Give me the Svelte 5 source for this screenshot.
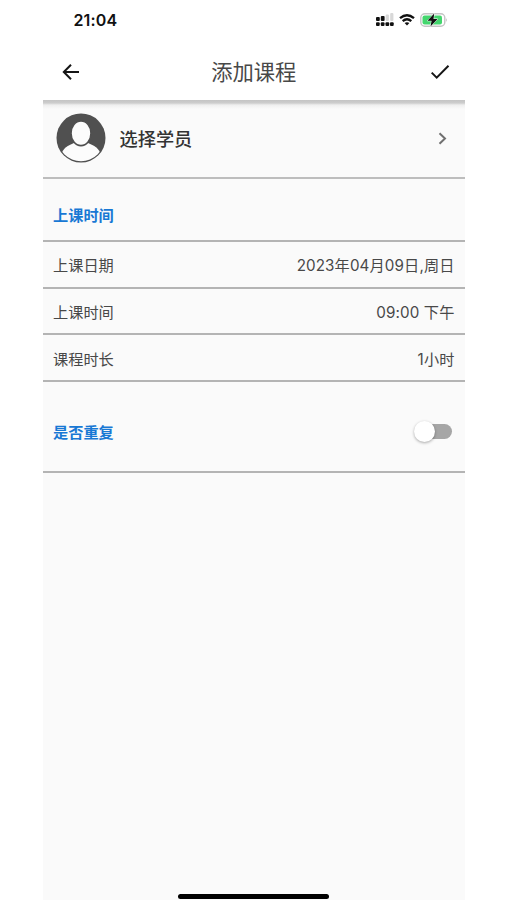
<script>
  const rows = [
    { label: '上课日期', value: '2023年04月09日,周日' },
    { label: '上课时间', value: '09:00 下午' },
    { label: '课程时长', value: '1小时' }
  ];
  let repeat = $state(false);
</script>

<div class="phone">
  <header>
    <div class="status">
      <span class="time">21:04</span>
      <div class="indicators">
        <svg width="18" height="14" viewBox="0 0 18 14">
          <g fill="#111">
            <rect x="0" y="4" width="3.8" height="4" rx="1" />
            <rect x="4.8" y="3" width="3.8" height="5" rx="1" />
            <rect x="0" y="9.3" width="3.7" height="3.7" rx="1" />
            <rect x="4.8" y="9.3" width="3.7" height="3.7" rx="1" />
            <rect x="9.5" y="9.3" width="3.7" height="3.7" rx="1" />
            <rect x="14" y="9.3" width="3.7" height="3.7" rx="1" />
          </g>
          <g fill="#d8d8d8">
            <rect x="9.7" y="1.5" width="3.2" height="6.5" rx="1" />
            <rect x="14.2" y="0" width="3.2" height="8" rx="1" />
          </g>
        </svg>
        <svg class="wifi" width="16" height="12" viewBox="0 0 16 12" fill="none" stroke="#111" stroke-width="2.3">
          <path d="M1 4.2 Q8 -1.8 15 4.2" />
          <path d="M3.7 7.2 Q8 3.4 12.3 7.2" />
          <path d="M5.6 9.1 Q8 7.2 10.4 9.1 L8 11.6Z" fill="#111" stroke="none" />
        </svg>
        <svg class="battery" width="28" height="14" viewBox="0 0 28 14">
          <rect x=".8" y=".8" width="24" height="12.4" rx="4" fill="#fff" stroke="#c4c4c4" stroke-width="1.4" />
          <rect x="2.5" y="2.5" width="19.5" height="9" rx="2" fill="#43d66d" />
          <path d="M26 5 Q27.8 7 26 9Z" fill="#bdbdbd" />
          <path d="M14.2 .6 L7.4 7.8 H11.6 L10.5 13.4 L17.6 6 H13.5Z" fill="#111" stroke="#fff" stroke-width="1" paint-order="stroke" />
        </svg>
      </div>
    </div>
    <nav>
      <svg width="18" height="18" viewBox="0 0 18 18" fill="none" stroke="#151515" stroke-width="2">
        <path d="M9 1.7 L1.8 9 L9 16.3 M2 9 H17" />
      </svg>
      <h1>添加课程</h1>
      <svg width="20" height="16" viewBox="0 0 20 16" fill="none" stroke="#151515" stroke-width="2">
        <path d="M1.7 8.6 L6.7 13.6 L18.5 1.8" />
      </svg>
    </nav>
  </header>

  <div class="student">
    <svg width="50" height="50" viewBox="0 0 50 50">
      <defs><clipPath id="face"><circle cx="25" cy="25" r="23.3" /></clipPath></defs>
      <circle cx="25" cy="25" r="24.5" fill="#505050" />
      <g clip-path="url(#face)" fill="#fcfcfc">
        <path d="M5 42 C7 35 12 32.5 18 30 H32 C38 32.5 43 35 45 42 L40 50 H10Z" />
        <ellipse cx="25" cy="20.3" rx="10" ry="12.3" stroke="#505050" stroke-width="1.6" />
      </g>
    </svg>
    <span>选择学员</span>
    <svg class="chevron" width="9" height="13" viewBox="0 0 9 13" fill="none" stroke="#707070" stroke-width="2">
      <path d="M1.5 1.2 L7 6.5 L1.5 11.8" />
    </svg>
  </div>

  <div class="section">上课时间</div>
  {#each rows as row}
    <div class="row"><span>{row.label}</span><span class="value">{row.value}</span></div>
  {/each}
  <div class="section repeat">
    <span>是否重复</span>
    <button class="switch" class:on={repeat} aria-label="是否重复" onclick={() => (repeat = !repeat)}>
      <i></i>
    </button>
  </div>
  <div class="home"></div>
</div>

<style>
  :global(body) { background: #fff; }
  .phone {
    box-sizing: border-box;
    display: flex;
    flex-direction: column;
    width: 421.5px;
    height: 900px;
    margin-left: 43px;
    background: #fafafa;
    color: #484848;
    font-family: Inter, "Noto Sans CJK SC", sans-serif;
    font-size: 15.2px;
  }
  header {
    height: 100px;
    background: #fff;
    flex: none;
  }
  .status {
    display: flex;
    justify-content: space-between;
    align-items: center;
    height: 40px;
    padding: 0 17px 0 30.5px;
  }
  .time { font-size: 16px; font-weight: 600; color: #111; letter-spacing: 0.15px; }
  .indicators { display: flex; align-items: center; }
  .wifi { margin-left: 5px; }
  .battery { margin-left: 5px; }
  nav {
    display: flex;
    justify-content: space-between;
    align-items: center;
    height: 64px;
    padding: 0 14px 0 19px;
  }
  h1 { margin: 0 3px 0 0; font-size: 21.3px; font-weight: 400; line-height: 32px; color: #484848; }
  .student {
    box-sizing: border-box;
    display: flex;
    align-items: center;
    height: 78.5px;
    padding: 0 18px 0 13px;
    border-bottom: 2px solid #bdbdbd;
    background: linear-gradient(#c4c4c4 0, #cdcdcd 3px, #efefef 5px, #fafafa 9px);
    font-size: 18.2px;
    font-weight: 500;
    color: #333;
  }
  .student span { margin-left: 13.5px; }
  .chevron { margin-left: auto; }
  .section {
    box-sizing: border-box;
    display: flex;
    align-items: center;
    height: 63.3px;
    padding: 9px 10px 0;
    border-bottom: 2px solid #b4b4b4;
    font-weight: 700;
    color: #1878d4;
  }
  .row {
    box-sizing: border-box;
    display: flex;
    align-items: center;
    justify-content: space-between;
    height: 46.8px;
    padding: 0 10px;
    border-bottom: 2px solid #b4b4b4;
  }
  .value { letter-spacing: 0.12px; }
  .repeat {
    height: 90.6px;
    padding-top: 10px;
    justify-content: space-between;
  }
  .switch {
    display: flex;
    align-items: center;
    width: 33px;
    height: 14.5px;
    margin-right: 3px;
    padding: 0;
    border: 0;
    border-radius: 8px;
    background: #a6a6a6;
  }
  .switch i {
    flex: none;
    width: 21px;
    height: 21px;
    margin-left: -4.5px;
    border-radius: 50%;
    background: #fff;
    box-shadow: 0 1px 3px #0005;
  }
  .switch.on { background: #8bbce9; justify-content: flex-end; }
  .home {
    width: 151px;
    height: 5px;
    margin: auto auto 1.5px 135.3px;
    border-radius: 3px;
    background: #000;
  }
</style>
